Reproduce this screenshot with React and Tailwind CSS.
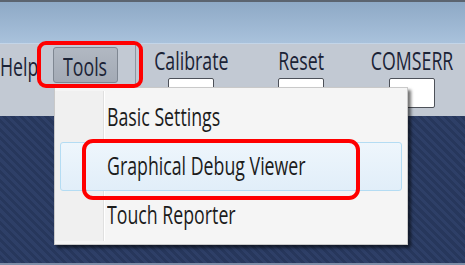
import React from 'react';

// labels in the screenshot are horizontally squashed, so text gets a scale-x
const Label = ({ children, className = '' }) => (
  <span className={`block whitespace-nowrap text-[25px] leading-[25px] scale-x-[0.71] ${className}`}>
    {children}
  </span>
);

const FieldColumn = ({ label, className = '' }) => (
  <div className={`flex w-[100px] flex-col items-center pt-[4px] ${className}`}>
    <Label className="origin-center text-[#1b2336]">{label}</Label>
    <div className="mt-[5px] h-[30px] w-[46px] rounded-[2px] border border-[#4d5159] bg-white" />
  </div>
);

const MenuItem = ({ label, active }) => (
  <div
    className={`flex h-[49px] items-center pl-[46px] pb-[2px] ${
      active ? 'rounded-[3px] border border-[#b4dcf3] bg-gradient-to-b from-[#eef6fc] to-[#e1eef9]' : 'border border-transparent'
    }`}
  >
    <Label className="origin-left text-[#1c1c1c]">{label}</Label>
  </div>
);

const App = () => {
  return (
    <div className="relative flex h-[265px] w-[465px] flex-col overflow-hidden font-['Open_Sans',sans-serif]">
      {/* window chrome */}
      <div className="h-[2px] bg-[#5b6470]" />
      <div className="h-[41px] bg-gradient-to-b from-[#8ea9c6] to-[#a9c2dc]" />
      <div className="h-[1px] bg-[#c3d5e8]" />

      {/* menu bar */}
      <div className="flex h-[72px] items-start bg-[#c2c9d3]">
        <div className="w-[53px] pt-[10px]">
          <Label className="origin-left text-[#1b2336]">Help</Label>
        </div>
        <div className="mt-[3px] flex h-[36px] w-[65px] items-center justify-center rounded-[3px] border border-[#7f8792] bg-gradient-to-b from-[#b1b8c2] to-[#a3aab5] pt-[3px]">
          <Label className="origin-center text-[#1b2336]">Tools</Label>
        </div>
        <div className="ml-[17px] mt-[1px] h-[40px] w-px bg-[#8d95a0]" />
        <FieldColumn label="Calibrate" className="ml-[5px]" />
        <FieldColumn label="Reset" className="ml-[10px]" />
        <FieldColumn label="COMSERR" className="ml-[11px]" />
      </div>

      {/* desktop */}
      <div className="flex-1 border-b-2 border-[#7e8ea8] bg-[repeating-linear-gradient(45deg,#2e3f67_0px,#2e3f67_3px,#27375c_3px,#27375c_6px)]" />

      {/* dropdown menu */}
      <div className="absolute left-[54px] top-[87px] h-[158px] w-[354px] border border-[#c9c9c9] bg-[#f5f5f5] px-[5px] py-[5px] shadow-[3px_3px_3px_rgba(0,0,0,0.55)]">
        <div className="absolute bottom-[3px] left-0 top-[3px] w-[48px] bg-[#f0f0f0]" />
        <div className="absolute bottom-[3px] left-[48px] top-[3px] w-px bg-[#e0e0e0]" />
        <div className="absolute bottom-[3px] left-[49px] top-[3px] w-px bg-white" />
        <div className="relative flex flex-col">
          <MenuItem label="Basic Settings" />
          <MenuItem label="Graphical Debug Viewer" active />
          <MenuItem label="Touch Reporter" />
        </div>
      </div>

      {/* callout outlines */}
      <div className="absolute left-[37px] top-[41px] h-[47px] w-[106px] rounded-[9px] border-4 border-[#ff0000]" />
      <div className="absolute left-[82px] top-[139px] h-[61px] w-[278px] rounded-[11px] border-4 border-[#ff0000]" />
    </div>
  );
};

export default App;
